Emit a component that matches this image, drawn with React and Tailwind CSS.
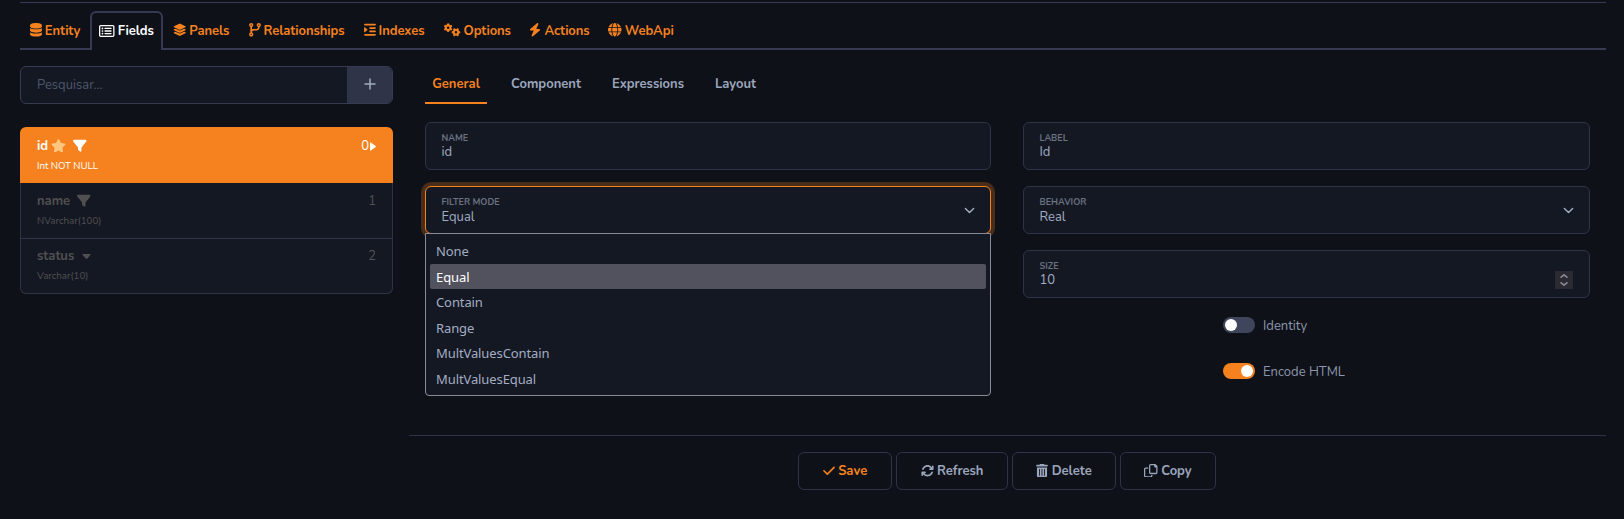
import React from "react";
import {
  FaDatabase, FaRegRectangleList, FaLayerGroup, FaCodeBranch, FaIndent, FaGears, FaBolt, FaGlobe,
  FaStar, FaFilter, FaCheck, FaArrowsRotate, FaTrashCan,
} from "react-icons/fa6";

function CopyIcon({ className }) {
  return (
    <svg viewBox="0 0 512 512" className={className} fill="currentColor">
      <path d="M502.6 70.63l-61.25-61.25C435.4 3.371 427.2 0 418.700 0H255.100c-35.350 0-64 28.660-64 64l.02 256C192 355.400 220.700 384 256 384h192c35.200 0 64-28.800 64-64V93.250C512 84.770 508.600 76.630 502.600 70.630zM464 320c0 8.836-7.164 16-16 16H255.100c-8.838 0-16-7.164-16-16L239.100 64.130c0-8.836 7.164-16 16-16h128L384 96c0 17.670 14.330 32 32 32h47.100V320zM272 448c0 8.836-7.164 16-16 16H63.100c-8.838 0-16-7.164-16-16L47.980 192.100c0-8.836 7.164-16 16-16H160V128H63.990c-35.350 0-64 28.650-64 64l.01 256C.002 483.300 28.660 512 64 512h192c35.200 0 64-28.800 64-64v-32h-47.100L272 448z" />
    </svg>
  );
}

const mainTabs = [
  { label: "Entity", Icon: FaDatabase, width: "w-[70px]", icon: "w-3 h-[13.5px]" },
  { label: "Fields", Icon: FaRegRectangleList, width: "w-[73px]", icon: "w-[15.5px] h-[14px]", active: true },
  { label: "Panels", Icon: FaLayerGroup, width: "w-[76px]", icon: "w-[13.5px] h-[13.5px]" },
  { label: "Relationships", Icon: FaCodeBranch, width: "w-[115px]", icon: "w-3 h-[13.5px]" },
  { label: "Indexes", Icon: FaIndent, width: "w-[80px]", icon: "w-3 h-[13.5px]" },
  { label: "Options", Icon: FaGears, width: "w-[87px]", icon: "w-[16.5px] h-[13.5px]" },
  { label: "Actions", Icon: FaBolt, width: "w-[77px]", icon: "w-3 h-[13.5px]" },
  { label: "WebApi", Icon: FaGlobe, width: "w-[86px]", icon: "w-[13.5px] h-[13.5px]" },
];

const subTabs = [
  { label: "General", width: "w-[62px]", active: true },
  { label: "Component", width: "w-[86px]" },
  { label: "Expressions", width: "w-[86px]" },
  { label: "Layout", width: "w-[57px]" },
];

const options = ["None", "Equal", "Contain", "Range", "MultValuesContain", "MultValuesEqual"];

const actions = [
  { label: "Save", Icon: FaCheck, width: "w-[94px]", color: "text-[#f6821f]", icon: "w-3" },
  { label: "Refresh", Icon: FaArrowsRotate, width: "w-[112px]", color: "text-[#9ba6bd]", icon: "w-[13px]" },
  { label: "Delete", Icon: FaTrashCan, width: "w-[104px]", color: "text-[#9ba6bd]", icon: "w-3" },
  { label: "Copy", Icon: CopyIcon, width: "w-[96px]", color: "text-[#9ba6bd]", icon: "w-[13.5px]" },
];

function MainTabs() {
  return (
    <div className="mt-2 flex h-[39px] text-[13px] font-bold tracking-[-0.08px]">
      {mainTabs.map(({ label, Icon, width, icon, active }) => (
        <div
          key={label}
          className={`${width} flex shrink-0 items-center justify-center gap-[3px] whitespace-nowrap ${
            active
              ? "rounded-t-md border-2 border-b-0 border-[#363a52] text-white"
              : "border-b-2 border-[#363a52] pt-[3px] text-[#f6821f]"
          }`}
        >
          <Icon className={`${icon} shrink-0 ${active ? "mb-px" : "mb-[2px]"}`} />
          <span className={active ? "" : "pt-px"}>{label}</span>
        </div>
      ))}
      <div className="grow border-b-2 border-[#363a52]" />
    </div>
  );
}

function Chevron() {
  return (
    <svg viewBox="0 0 16 16" className="h-[11px] w-[11px] text-[#a7b0c2]" fill="none" stroke="currentColor" strokeWidth="2" strokeLinecap="round" strokeLinejoin="round">
      <path d="M2 5l6 6 6-6" />
    </svg>
  );
}

function Field({ label, value, select, focused, children }) {
  return (
    <div
      className={`relative flex h-12 rounded-md border bg-[#141823] pl-[15.5px] pr-[15px] ${
        focused ? "border-[#f6821f] ring-4 ring-[#f6821f]/25" : "border-[#2e3348]"
      }`}
    >
      <div className="grow pt-[9px]">
        <div className="text-[9px] font-bold leading-3 text-[#6b7280]">{label}</div>
        <div className={`text-[13px] leading-4 text-[#a3adc2] ${select ? "pt-px" : ""}`}>{value}</div>
      </div>
      {select && (
        <div className="flex items-center pt-px">
          <Chevron />
        </div>
      )}
      {children}
    </div>
  );
}

function Row({ name, type, index, marker, last }) {
  return (
    <div className={`px-4 text-[#505050] ${last ? "h-[54px] pt-2" : "h-14 border-b border-[#2e3348] pt-[9px]"}`}>
      <div className="flex h-[18px] items-center">
        <span className="pt-[2px] text-[13px] font-bold">{name}</span>
        {marker}
        <span className="ml-auto pt-[2px] text-[13px]">{index}</span>
      </div>
      <div className="mt-[3px] text-[9.75px] leading-4">{type}</div>
    </div>
  );
}

function Toggle({ on, label }) {
  return (
    <div className="flex h-4 items-center gap-2">
      <span className={`flex h-4 w-8 items-center rounded-full px-0.5 ${on ? "justify-end bg-[#f6821f]" : "bg-[#3f465c]"}`}>
        <span className="h-3 w-3 rounded-full bg-white" />
      </span>
      <span className="pt-[3px] text-[13px] text-[#8d97ad]">{label}</span>
    </div>
  );
}

export default function App() {
  return (
    <div className="h-[519px] w-full overflow-hidden bg-[#0e1118] pl-5 pr-[18px] pt-0.5 font-['Nunito','Lato',sans-serif]">
      <div className="h-px bg-[#363a52]" />
      <MainTabs />
      <div className="flex">
        <aside className="w-[373px] shrink-0 pt-4">
          <div className="flex h-[38px] overflow-hidden rounded-md border border-[#363a52] bg-[#141823]">
            <div className="flex grow items-center pl-4 pt-px text-[13px] text-[#4e576b]">Pesquisar...</div>
            <button className="flex w-[45px] items-center justify-center bg-[#2f3449] text-[#a3adc2]">
              <svg viewBox="0 0 12 12" className="mb-0.5 h-3 w-3" stroke="currentColor" strokeWidth="1.5">
                <path d="M6 0.5v11M0.5 6h11" />
              </svg>
            </button>
          </div>
          <div className="mt-[23px]">
            <div className="h-14 rounded-t-md bg-[#f6821f] px-[17px] pt-[10px] text-white">
              <div className="flex h-[18px] items-center">
                <span className="pt-[2px] text-[13px] font-bold">id</span>
                <FaStar className="mb-px ml-[3px] h-[13.5px] w-[15px] text-[#ffc680]" />
                <FaFilter className="mb-px ml-[7px] h-[13.5px] w-[13.5px]" />
                <span className="ml-auto pt-[2px] text-[13px]">0</span>
                <svg viewBox="0 0 5 9" className="ml-px mt-px h-[9px] w-[6px]" preserveAspectRatio="none" fill="currentColor">
                  <path d="M0 .9Q0 0 .8.500L4.700 4Q5.200 4.500 4.700 5L.8 8.500Q0 9 0 8.100z" />
                </svg>
              </div>
              <div className="mt-[3px] text-[9.75px] leading-4 tracking-[-0.05px]">Int NOT NULL</div>
            </div>
            <div className="rounded-b-md border border-t-0 border-[#2e3348] bg-[#141823]">
              <Row name="name" type="NVarchar(100)" index="1" marker={<FaFilter className="mb-px ml-[7px] h-[13.5px] w-[13.5px]" />} />
              <Row
                name="status"
                type="Varchar(10)"
                index="2"
                marker={
                  <svg viewBox="0 0 9 5" className="ml-2 h-[5px] w-[9px]" fill="currentColor">
                    <path d="M.9 0Q0 0 .5.800L4 4.700Q4.500 5.200 5 4.700L8.500.8Q9 0 8.100 0z" />
                  </svg>
                }
                last
              />
            </div>
          </div>
        </aside>

        <main className="ml-4 flex h-[469px] grow flex-col">
          <div className="h-[386px] border-b border-[#2e3348] pl-4 pr-4">
            <nav className="flex h-[54px] gap-4 pt-4 text-[13px] font-bold text-[#9ba6bd]">
              {subTabs.map(({ label, width, active }) => (
                <div
                  key={label}
                  className={`${width} flex items-center justify-center border-b-2 pt-[2px] ${active ? "border-[#f6821f] text-[#f6821f]" : "border-transparent"}`}
                >
                  {label}
                </div>
              ))}
            </nav>
            <div className="mt-[18px] grid grid-cols-[566px_567px] gap-x-8">
              <div className="flex flex-col gap-4">
                <Field label="NAME" value="id" />
                <Field label="FILTER MODE" value="Equal" select focused>
                  <ul className="absolute -left-px -right-px top-[46px] z-10 h-[163px] rounded-b border border-[#8a8a96] bg-[#141823] px-1 pt-1 font-['Noto_Sans',sans-serif] text-[13px] tracking-[-0.1px] text-[#a3adc2]">
                    {options.map((o) => (
                      <li
                        key={o}
                        className={`flex h-[25.5px] items-center rounded-[2px] px-1.5 pt-[2px] ${o === "Equal" ? "bg-[#52525e] text-white" : ""}`}
                      >
                        {o}
                      </li>
                    ))}
                  </ul>
                </Field>
              </div>
              <div className="flex flex-col gap-4">
                <Field label="LABEL" value="Id" />
                <Field label="BEHAVIOR" value="Real" select />
                <Field label="SIZE" value="10">
                  <div className="mr-px mt-5 flex h-[18px] w-[18px] flex-col items-center justify-center gap-1 bg-[#2b2a33] text-[#8a8a96]">
                    <svg viewBox="0 0 8 4" className="h-1 w-2" fill="none" stroke="currentColor" strokeWidth="1.5"><path d="M.5 3.7L4 .8l3.500 2.900" /></svg>
                    <svg viewBox="0 0 8 4" className="h-1 w-2" fill="none" stroke="currentColor" strokeWidth="1.5"><path d="M.5.3L4 3.200 7.500.3" /></svg>
                  </div>
                </Field>
                <div className="ml-[200px] mt-[3px] flex flex-col gap-[30px]">
                  <Toggle label="Identity" />
                  <Toggle label="Encode HTML" on />
                </div>
              </div>
            </div>
          </div>
          <div className="flex justify-center gap-1 pr-0.5 pt-4">
            {actions.map(({ label, Icon, width, color, icon }) => (
              <button
                key={label}
                className={`${width} ${color} flex h-[38px] items-center justify-center gap-[3.4px] rounded-md border border-[#2e3348] pl-px text-[13px] font-bold`}
              >
                <Icon className={`${icon} mb-px h-[13.5px]`} />
                <span className="pt-[2px]">{label}</span>
              </button>
            ))}
          </div>
        </main>
      </div>
    </div>
  );
}
